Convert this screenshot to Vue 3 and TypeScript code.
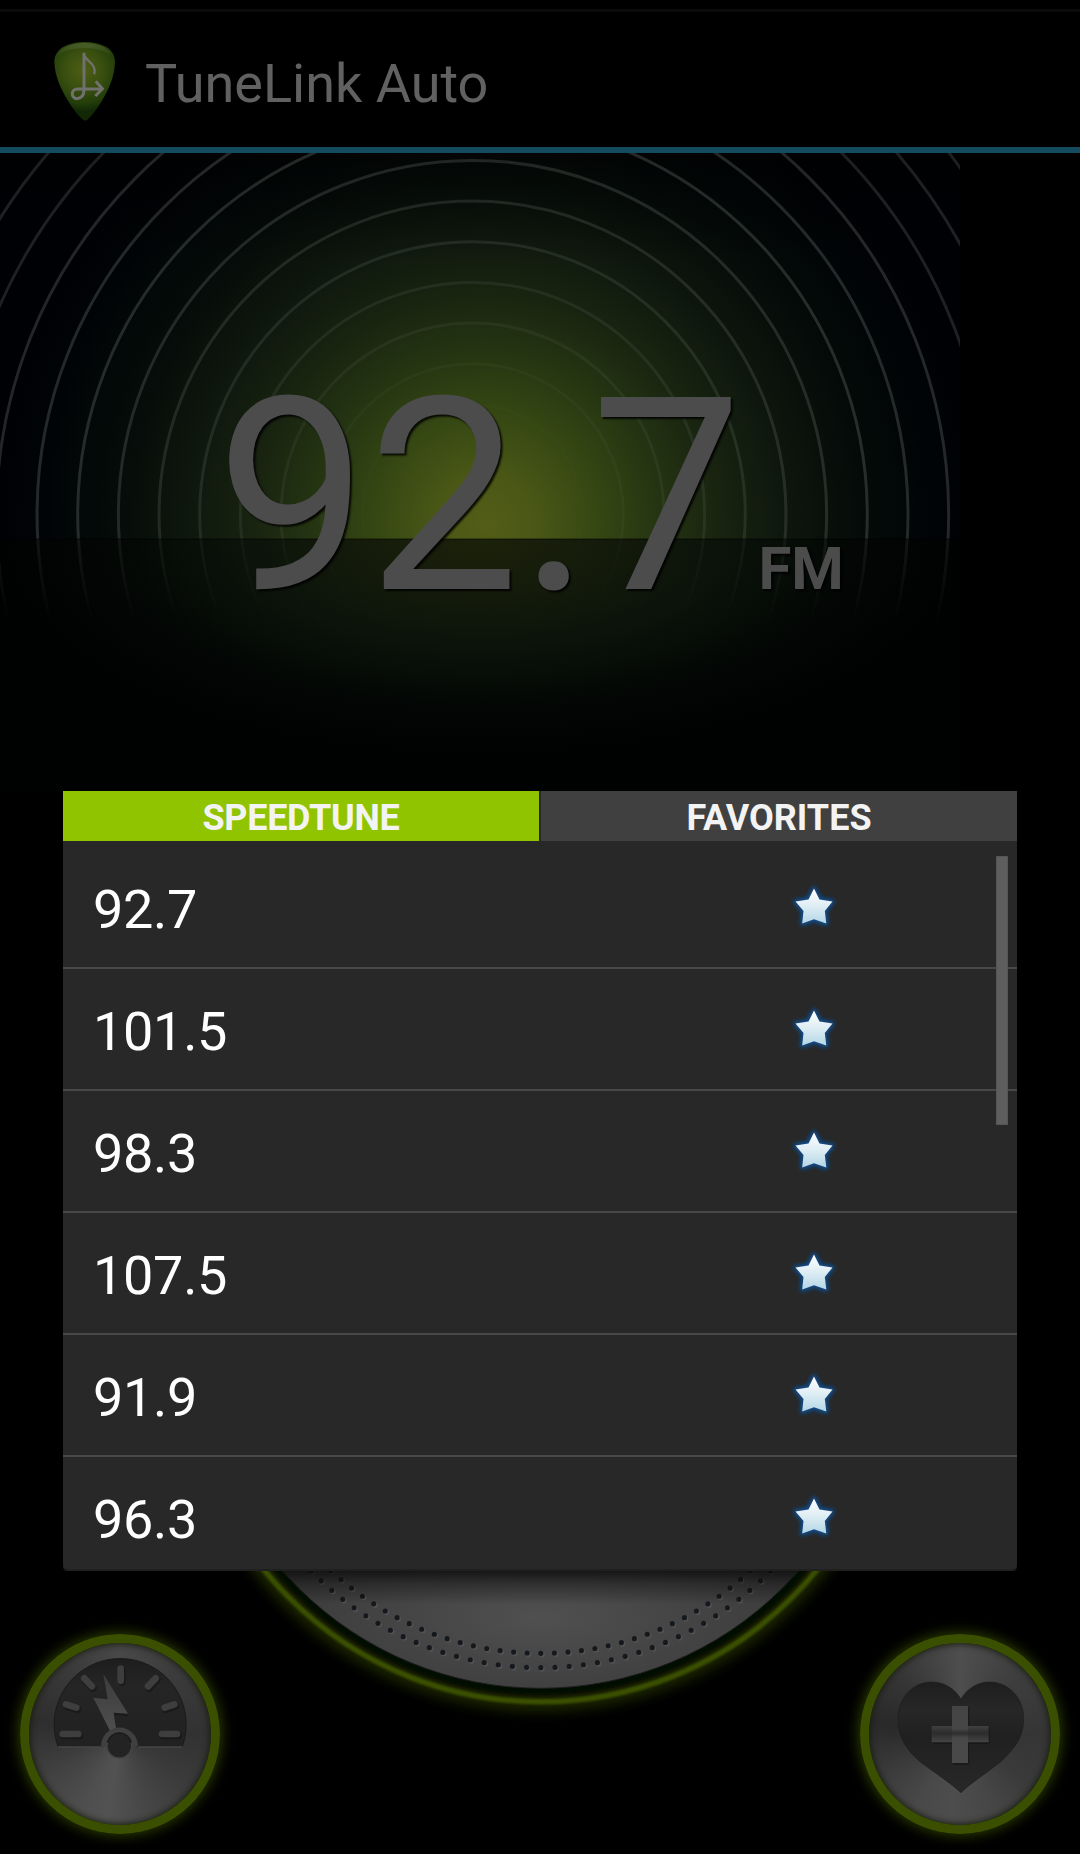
<script setup lang="ts">
import { ref } from 'vue'

interface Dot { x: number; y: number }

const tabs = ['SPEEDTUNE', 'FAVORITES']
const activeTab = ref(0)
const stations = ['92.7', '101.5', '98.3', '107.5', '91.9', '96.3']

const rings = Array.from({ length: 13 }, (_, i) => 110.1 + i * 40.67)
const ringOpacity = (r: number): number => Math.min(1, Math.max(0.07, (r - 80) / 310)) * (r > 500 ? 0.85 : 1)

const STEP = (2.535 * Math.PI) / 180
const dotRow = (r: number): Dot[] =>
  Array.from({ length: 39 }, (_, i) => {
    const a = (i - 19) * STEP
    return { x: 541 + r * Math.sin(a), y: 1346.3 + r * Math.cos(a) }
  })
const dots = [...dotRow(307.2), ...dotRow(321.5)]

const ticks = [
  [188, 372, 235, 372],
  [198, 283, 229, 293],
  [253, 205, 276, 229],
  [362, 176, 362, 212],
  [467, 205, 444, 229],
  [523, 283, 494, 293],
  [486, 372, 531, 372],
]
</script>

<template>
  <div class="screen">
    <div class="status" />
    <header class="bar">
      <svg class="logo" viewBox="0 0 270 300">
        <defs>
          <radialGradient id="pick" gradientUnits="userSpaceOnUse" cx="130" cy="120" r="125">
            <stop offset="0" stop-color="#4f5e14" />
            <stop offset="0.45" stop-color="#3a5010" />
            <stop offset="0.8" stop-color="#233e0a" />
            <stop offset="1" stop-color="#122706" />
          </radialGradient>
          <linearGradient id="pickTop" x1="0" y1="0" x2="0" y2="1">
            <stop offset="0" stop-color="#fff" stop-opacity="0.12" />
            <stop offset="1" stop-color="#fff" stop-opacity="0" />
          </linearGradient>
        </defs>
        <path d="M43 96C43 74 54 60 70 50C104 31 164 31 198 50C215 60 225 74 225 97C224 140 206 178 187 211C170 240 153 260 142 269Q135 274 129 269C117 260 99 238 83 211C63 177 44 138 43 96Z" fill="url(#pick)" />
        <path d="M50 84C56 66 68 54 84 48C114 36 154 36 184 48C200 54 212 66 218 84C206 66 184 56 134 54C84 56 62 66 50 84Z" fill="url(#pickTop)" />
        <g fill="none" stroke="#70716c" stroke-width="9">
          <path d="M132 68V177C133 197 122 206 111 206C90 203 94 177 112 177H184" />
          <path d="M167 154L187 176L166 198" />
          <path d="M132 76C141 97 170 101 163 133" stroke-width="7" />
        </g>
      </svg>
      <h1>TuneLink Auto</h1>
    </header>

    <section class="display">
      <svg class="waves" viewBox="0 153 960 638" width="960" height="638">
        <defs>
          <radialGradient id="glow" gradientUnits="userSpaceOnUse" cx="486" cy="524" r="490">
            <stop offset="0" stop-color="#535d16" />
            <stop offset="0.1" stop-color="#4a5716" />
            <stop offset="0.22" stop-color="#364813" />
            <stop offset="0.35" stop-color="#253512" />
            <stop offset="0.48" stop-color="#182310" />
            <stop offset="0.62" stop-color="#0d160d" />
            <stop offset="0.76" stop-color="#050b09" />
            <stop offset="0.9" stop-color="#010406" />
            <stop offset="1" stop-color="#000105" />
          </radialGradient>
          <radialGradient id="floor" gradientUnits="userSpaceOnUse" cx="0" cy="0" r="1" gradientTransform="translate(482 539) scale(500 225)">
            <stop offset="0" stop-color="#1c210a" />
            <stop offset="0.25" stop-color="#141b0b" />
            <stop offset="0.5" stop-color="#0a120a" />
            <stop offset="0.75" stop-color="#030604" />
            <stop offset="1" stop-color="#000101" />
          </radialGradient>
          <linearGradient id="fade" gradientUnits="userSpaceOnUse" x1="0" y1="539" x2="0" y2="628">
            <stop offset="0" stop-color="#fff" stop-opacity="0.55" />
            <stop offset="1" stop-color="#fff" stop-opacity="0" />
          </linearGradient>
          <linearGradient id="top" x1="0" y1="0" x2="0" y2="1">
            <stop offset="0" stop-color="#000" stop-opacity="0.5" />
            <stop offset="1" stop-color="#000" stop-opacity="0" />
          </linearGradient>
          <clipPath id="upper"><rect x="0" y="153" width="960" height="386" /></clipPath>
          <mask id="lower"><rect x="0" y="539" width="960" height="92" fill="url(#fade)" /></mask>
        </defs>
        <rect x="0" y="153" width="960" height="386" fill="url(#glow)" />
        <rect x="0" y="153" width="960" height="110" fill="url(#top)" />
        <rect x="0" y="539" width="960" height="252" fill="url(#floor)" />
        <g fill="none" stroke="#8d9690" stroke-opacity="0.25" stroke-width="3" clip-path="url(#upper)">
          <circle v-for="r in rings" :key="r" cx="472.5" cy="514.5" :r="r" :opacity="ringOpacity(r)" />
        </g>
        <g fill="none" stroke="#8d9690" stroke-opacity="0.22" stroke-width="3" mask="url(#lower)">
          <circle v-for="r in rings" :key="r" cx="472.5" cy="514.5" :r="r" :opacity="ringOpacity(r)" />
        </g>
        <rect x="0" y="538" width="960" height="2" fill="#000" opacity="0.3" />
      </svg>
      <div class="freq">
        <span class="value">92.7</span><span class="band">FM</span>
      </div>
    </section>

    <section class="deck">
      <div class="round">
        <div class="disc speed" />
        <svg class="glyph" viewBox="0 0 720 732">
          <defs>
            <linearGradient id="dial" x1="0" y1="0" x2="0" y2="1">
              <stop offset="0" stop-color="#1d1d1d" /><stop offset="0.3" stop-color="#252525" /><stop offset="1" stop-color="#212121" />
            </linearGradient>
            <linearGradient id="bolt" x1="0" y1="0" x2="0" y2="1">
              <stop offset="0" stop-color="#3c3c3c" /><stop offset="1" stop-color="#4e4e4e" />
            </linearGradient>
          </defs>
          <path d="M174 410A198 198 0 1 1 547 410H412A54 54 0 0 0 306 410Z" fill="url(#dial)" stroke="#1a1a1a" stroke-width="3" />
          <path d="M174 411H305M414 411H547" stroke="#484848" stroke-width="4" />
          <path v-for="(t, i) in ticks" :key="i" :d="`M${t[0]} ${t[1]}L${t[2]} ${t[3]}`" transform="translate(3 5)" stroke="#151515" stroke-width="23" stroke-linecap="round" opacity="0.6" />
          <path v-for="(t, i) in ticks" :key="'t' + i" :d="`M${t[0]} ${t[1]}L${t[2]} ${t[3]}`" stroke="#3e3e3e" stroke-width="20" stroke-linecap="round" />
          <path d="M310 196L384 315L341 310L350 365H329L282 265L324 269Z" transform="translate(2 4)" fill="#151515" opacity="0.6" />
          <path d="M310 192L384 311L341 308L350 365H331L280 263L323 268Z" fill="url(#bolt)" />
          <path d="M303 408A55 55 0 0 1 414 408L396 412A39 39 0 0 0 320 412Z" fill="#404040" />
          <circle cx="358" cy="407" r="37" fill="#232323" stroke="#444" stroke-width="4" />
          <path d="M322 398A37 37 0 0 1 394 398" fill="none" stroke="#191919" stroke-width="5" />
        </svg>
      </div>

      <svg class="knob" viewBox="240 1540 600 190">
        <defs>
          <radialGradient id="metal" gradientUnits="userSpaceOnUse" cx="0" cy="0" r="1" gradientTransform="translate(540 1618) scale(300 105)">
            <stop offset="0" stop-color="#505050" /><stop offset="0.45" stop-color="#454545" /><stop offset="1" stop-color="#393939" />
          </radialGradient>
          <linearGradient id="cast" gradientUnits="userSpaceOnUse" x1="0" y1="1570" x2="0" y2="1604">
            <stop offset="0" stop-color="#0c0c0c" stop-opacity="0.85" /><stop offset="0.4" stop-color="#0c0c0c" stop-opacity="0.4" /><stop offset="1" stop-color="#0c0c0c" stop-opacity="0" />
          </linearGradient>
          <filter id="soft" x="-10%" y="-10%" width="120%" height="120%"><feGaussianBlur stdDeviation="7" /></filter>
          <filter id="edge"><feGaussianBlur stdDeviation="0.8" /></filter>
        </defs>
        <circle cx="540.5" cy="1346.3" r="356" fill="none" stroke="#344600" stroke-width="16" opacity="0.6" filter="url(#soft)" />
        <circle cx="540.5" cy="1346.3" r="348" fill="#060a00" filter="url(#edge)" />
        <circle cx="540.5" cy="1346.3" r="355.5" fill="none" stroke="#3b5000" stroke-width="5.5" filter="url(#edge)" />
        <circle cx="540.5" cy="1346.3" r="342" fill="url(#metal)" stroke="#1c1c1c" stroke-width="1" />
        <g fill="#565656" opacity="0.8">
          <ellipse v-for="(d, i) in dots" :key="i" :cx="d.x + 1" :cy="d.y + 1" rx="2.8" ry="2.9" />
        </g>
        <g fill="#15181c">
          <ellipse v-for="(d, i) in dots" :key="i" :cx="d.x - 0.2" :cy="d.y - 0.2" rx="2.5" ry="2.6" />
        </g>
        <circle cx="540.5" cy="1346.3" r="342" fill="url(#cast)" />
      </svg>

      <div class="round">
        <div class="disc fav" />
        <svg class="glyph" viewBox="0 0 720 732">
          <defs>
            <linearGradient id="heart" x1="0" y1="0" x2="0" y2="1">
              <stop offset="0" stop-color="#1e1e1e" /><stop offset="0.25" stop-color="#272727" /><stop offset="0.5" stop-color="#202020" /><stop offset="1" stop-color="#282828" />
            </linearGradient>
            <linearGradient id="plusV" x1="0" y1="0" x2="0" y2="1">
              <stop offset="0" stop-color="#444" /><stop offset="0.4" stop-color="#464646" /><stop offset="0.48" stop-color="#2e2e2e" /><stop offset="0.56" stop-color="#484848" /><stop offset="1" stop-color="#494949" />
            </linearGradient>
            <linearGradient id="plusH" x1="0" y1="0" x2="0" y2="1">
              <stop offset="0" stop-color="#404040" /><stop offset="0.45" stop-color="#2c2c2c" /><stop offset="1" stop-color="#454545" />
            </linearGradient>
          </defs>
          <path d="M363 268C345 236 313 216 275 216C218 216 174 264 174 326C174 382 200 420 240 455C290 492 330 518 363 548C396 516 436 492 482 455C526 414 551 380 551 326C551 264 506 216 449 216C412 216 381 236 363 268Z" fill="url(#heart)" stroke="#1c1c1c" stroke-width="2" />
          <path d="M339 292H388V352H449V402H388V464H339V402H279V352H339Z" fill="#141414" opacity="0.6" />
          <path d="M275 348H446V397H275Z" fill="url(#plusH)" />
          <path d="M336 288H384V459H336Z" fill="url(#plusV)" />
        </svg>
      </div>
    </section>

    <div class="dialog">
      <div class="tabs">
        <button v-for="(t, i) in tabs" :key="t" class="tab" :class="{ active: i === activeTab }" @click="activeTab = i">{{ t }}</button>
      </div>
      <ul class="list">
        <li v-for="s in stations" :key="s">
          <span>{{ s }}</span>
          <svg class="star" viewBox="0 0 80 80">
            <defs>
              <linearGradient id="ice" x1="0" y1="0" x2="0" y2="1">
                <stop offset="0" stop-color="#fff" /><stop offset="0.45" stop-color="#e2eff5" /><stop offset="1" stop-color="#b4d7e6" />
              </linearGradient>
              <filter id="halo" x="-50%" y="-50%" width="200%" height="200%"><feGaussianBlur stdDeviation="2" /></filter>
            </defs>
            <path d="M40 18.500L45.500 29.500L58.500 31.500L50.800 41L52.300 53.500L40 49.300L28.200 53.500L29.500 41L21.500 31.500L34.500 29.500Z" fill="#0b4d91" stroke="#0b4f98" stroke-width="4" stroke-linejoin="round" filter="url(#halo)" />
            <path d="M40 18.500L45.500 29.500L58.500 31.500L50.800 41L52.300 53.500L40 49.300L28.200 53.500L29.500 41L21.500 31.500L34.500 29.500Z" fill="url(#ice)" />
          </svg>
        </li>
      </ul>
      <div class="thumb" />
    </div>
  </div>
</template>

<style>
body {
  background: #000;
}
</style>

<style scoped>
.screen {
  position: relative;
  box-sizing: border-box;
  width: 1080px;
  height: 1854px;
  display: flex;
  flex-direction: column;
  overflow: hidden;
  background: #000;
  font-family: Roboto, 'Noto Sans', sans-serif;
}
.status {
  box-sizing: border-box;
  height: 12px;
  border-bottom: 3px solid #0b0b0b;
}
.bar {
  display: flex;
  align-items: flex-start;
  box-sizing: border-box;
  height: 141px;
  padding: 18px 0 0 40px;
  border-bottom: 6px solid #144b5f;
}
.logo {
  width: 90px;
  height: 100px;
}
h1 {
  margin: 22px 0 0 15px;
  font-size: 54px;
  line-height: 64px;
  font-weight: 400;
  color: #616161;
}
.display {
  display: grid;
  height: 638px;
}
.waves {
  grid-area: 1 / 1;
}
.freq {
  grid-area: 1 / 1;
  display: flex;
  align-items: baseline;
  align-self: start;
  justify-self: start;
  z-index: 1;
  margin: 186px 0 0 216px;
  color: #4c4c4c;
  line-height: 316px;
  text-shadow: 2px 2px 2px rgba(0, 0, 0, 0.85);
}
.value {
  font-size: 270px;
}
.band {
  margin-left: 16px;
  font-size: 60px;
  font-weight: 700;
}
.deck {
  display: flex;
  align-items: flex-end;
  height: 314px;
  margin-top: auto;
}
.round {
  display: grid;
  place-items: center;
  width: 240px;
  height: 244px;
}
.disc,
.glyph {
  grid-area: 1 / 1;
}
.disc {
  box-sizing: border-box;
  width: 200px;
  height: 200px;
  margin-top: 4px;
  border: 9px solid #3a4f00;
  border-radius: 50%;
  box-shadow: 0 0 14px 1px rgba(66, 90, 0, 0.75), inset 0 0 6px 1px #181c10;
}
.disc.speed {
  background: conic-gradient(from 0deg, #484848, #3b3b3b 45deg, #323232 90deg, #3a3a3a 125deg, #464646 160deg, #525252 188deg, #4f4f4f 205deg, #424242 238deg, #2e2e2e 278deg, #383838 315deg, #484848) padding-box;
}
.disc.fav {
  background: conic-gradient(from 0deg, #4e4e4e, #3f3f3f 40deg, #353535 90deg, #3a3a3a 125deg, #464646 155deg, #4d4d4d 185deg, #494949 210deg, #3c3c3c 240deg, #292929 277deg, #363636 315deg, #4e4e4e) padding-box;
}
.glyph {
  width: 240px;
  height: 244px;
}
.knob {
  align-self: flex-start;
  width: 600px;
  height: 190px;
}
.dialog {
  position: absolute;
  left: 63px;
  top: 791px;
  width: 954px;
  height: 780px;
  overflow: hidden;
  border-radius: 0 0 5px 5px;
  background: #282828;
  box-shadow: inset 0 -2px 0 #202020;
}
.tabs {
  display: flex;
  gap: 2px;
  height: 50px;
}
.tab {
  flex: 1;
  height: 50px;
  padding: 4px 0 0;
  border: 0;
  font: 700 36px/46px Roboto, sans-serif;
  color: #f3f3f3;
  background: #404040;
}
.tab.active {
  letter-spacing: -0.3px;
  background: #91c400;
}
.list {
  margin: 6px 0 0;
  padding: 0;
  list-style: none;
}
li {
  display: flex;
  align-items: center;
  box-sizing: border-box;
  height: 122px;
  padding: 4px 0 0 30px;
  border-bottom: 2px solid #484848;
  font-size: 54px;
  letter-spacing: -0.3px;
  color: #fff;
}
li span {
  width: 681px;
}
.star {
  width: 80px;
  height: 80px;
  margin-top: 2px;
}
li:last-child {
  border-bottom-color: transparent;
}
.thumb {
  position: absolute;
  top: 65px;
  right: 9px;
  width: 12px;
  height: 269px;
  background: #5e5e5e;
  box-shadow: inset 0 0 0 1px #555;
}
</style>
